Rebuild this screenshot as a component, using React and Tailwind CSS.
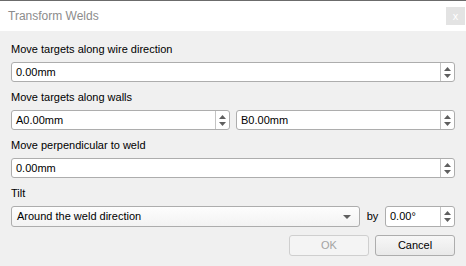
import React from "react";

function SpinArrows() {
  return (
    <div className="flex h-full w-[14px] flex-col items-center justify-center gap-[3px] border-l border-[#c4c4c4]">
      <svg width="7" height="4" viewBox="0 0 7 4">
        <path d="M0 4 L3.5 0 L7 4 Z" fill="#5f5f5f" />
      </svg>
      <svg width="7" height="4" viewBox="0 0 7 4">
        <path d="M0 0 L3.5 4 L7 0 Z" fill="#5f5f5f" />
      </svg>
    </div>
  );
}

function SpinBox({ value, className = "" }) {
  return (
    <div
      className={
        "flex h-[20px] items-center rounded-[3px] border border-[#adadad] bg-white " +
        className
      }
    >
      <div className="flex-1 pl-[4px] text-[11px] leading-none text-black">{value}</div>
      <SpinArrows />
    </div>
  );
}

function Label({ children }) {
  return <div className="h-[14px] text-[11px] leading-[14px] text-black">{children}</div>;
}

export default function App() {
  return (
    <div
      className="flex h-[266px] w-[466px] flex-col bg-[#f0f0f0]"
      style={{ fontFamily: '"Liberation Sans", Arial, sans-serif' }}
    >
      {/* title bar */}
      <div className="flex h-[31px] items-center justify-between border-t border-[#6b6b6b] bg-white pl-[8px] pr-[1px]">
        <span className="text-[12px] text-[#8c8c8c]">Transform Welds</span>
        <div className="flex h-[18px] w-[19px] items-center justify-center bg-[#e3e3e3] text-[11px] leading-none text-white">
          x
        </div>
      </div>

      {/* body */}
      <div className="flex flex-col gap-[8px] px-[11px] pt-[11px]">
        <div className="flex flex-col gap-[6px]">
          <Label>Move targets along wire direction</Label>
          <SpinBox value="0.00mm" />
        </div>

        <div className="flex flex-col gap-[6px]">
          <Label>Move targets along walls</Label>
          <div className="flex gap-[6px]">
            <SpinBox value="A0.00mm" className="flex-1" />
            <SpinBox value="B0.00mm" className="flex-1" />
          </div>
        </div>

        <div className="flex flex-col gap-[6px]">
          <Label>Move perpendicular to weld</Label>
          <SpinBox value="0.00mm" />
        </div>

        <div className="flex flex-col gap-[6px]">
          <Label>Tilt</Label>
          <div className="flex h-[21px] items-center">
            <div className="flex h-full flex-1 items-center rounded-[3px] border border-[#adadad] bg-gradient-to-b from-[#fdfdfd] to-[#f3f3f3] pl-[5px] pr-[8px]">
              <span className="flex-1 text-[11px] text-black">Around the weld direction</span>
              <svg width="8" height="4" viewBox="0 0 8 4">
                <path d="M0 0 L4 4 L8 0 Z" fill="#5f5f5f" />
              </svg>
            </div>
            <span className="w-[25px] text-center text-[11px] text-black">by</span>
            <SpinBox value="0.00°" className="h-[21px] w-[70px]" />
          </div>
        </div>

        <div className="flex justify-end gap-[6px]">
          <div className="flex h-[21px] w-[80px] items-center justify-center rounded-[3px] border border-[#cfcfcf] bg-[#f4f4f4] text-[11px] text-[#a3a3a3]">
            OK
          </div>
          <div className="flex h-[21px] w-[80px] items-center justify-center rounded-[3px] border border-[#adadad] bg-gradient-to-b from-[#f7f7f7] to-[#e9e9e9] text-[11px] text-black">
            Cancel
          </div>
        </div>
      </div>
    </div>
  );
}
